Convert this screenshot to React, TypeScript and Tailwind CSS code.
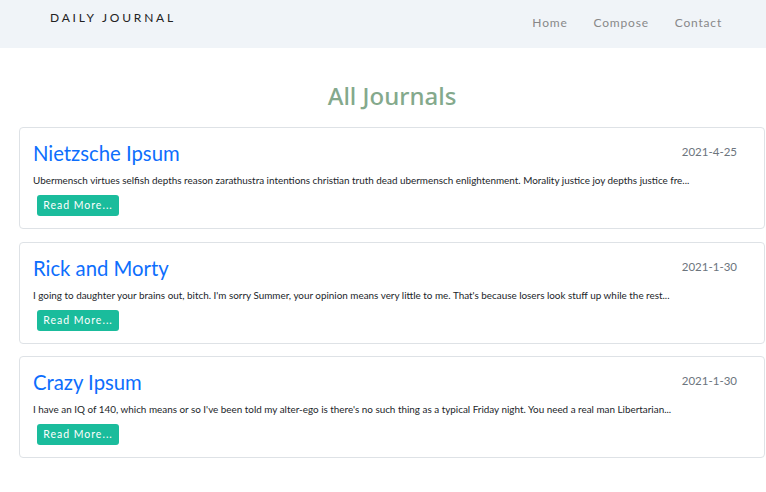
import React from "react";

const posts = [
  {
    title: "Nietzsche Ipsum",
    date: "2021-4-25",
    body: "Ubermensch virtues selfish depths reason zarathustra intentions christian truth dead ubermensch enlightenment. Morality justice joy depths justice fre...",
  },
  {
    title: "Rick and Morty",
    date: "2021-1-30",
    body: "I going to daughter your brains out, bitch. I'm sorry Summer, your opinion means very little to me. That's because losers look stuff up while the rest...",
  },
  {
    title: "Crazy Ipsum",
    date: "2021-1-30",
    body: "I have an IQ of 140, which means or so I've been told my alter-ego is there's no such thing as a typical Friday night. You need a real man Libertarian...",
  },
];

export default function App() {
  return (
    <div className="min-h-[492px] bg-white" style={{ fontFamily: 'Lato, sans-serif' }}>
      <nav className="h-[48px] bg-[#f0f4f8] flex items-start justify-between">
        <div className="pl-[50px] pt-[10px] text-[12px] tracking-[2.8px] text-[#222] leading-[16px]">DAILY JOURNAL</div>
        <ul className="flex gap-[26px] pr-[44px] pt-[15px] text-[12px] tracking-[0.8px] text-[#888] leading-[16px]">
          <li>Home</li>
          <li>Compose</li>
          <li>Contact</li>
        </ul>
      </nav>
      <h1 className="text-center text-[24px] font-medium text-[#84a98c] mt-[33px] leading-[30px] pl-[18px]" style={{ fontFamily: '"Noto Sans", sans-serif' }}>All Journals</h1>
      <div className="pl-[19px] pr-[1px] mt-[16px] flex flex-col gap-[12.5px]">
        {posts.map((p) => (
          <div key={p.title} className="border border-[#dee2e6] rounded-[4px] h-[102px] px-[13px] pt-[11px] relative">
            <div className="flex justify-between">
              <h2 className="text-[20.3px] text-[#0d6efd] leading-[28px]">{p.title}</h2>
              <span className="text-[11.5px] text-[#6c757d] mr-[14px] mt-[4px]">{p.date}</span>
            </div>
            <p className="text-[9.9px] text-[#212529] mt-[6px] leading-[14px]">{p.body}</p>
            <button className="mt-[8px] ml-[4px] bg-[#1abc9c] text-white text-[10.5px] tracking-[1px] rounded-[3px] w-[82px] h-[21px] leading-[21px]">Read More...</button>
          </div>
        ))}
      </div>
    </div>
  );
}
